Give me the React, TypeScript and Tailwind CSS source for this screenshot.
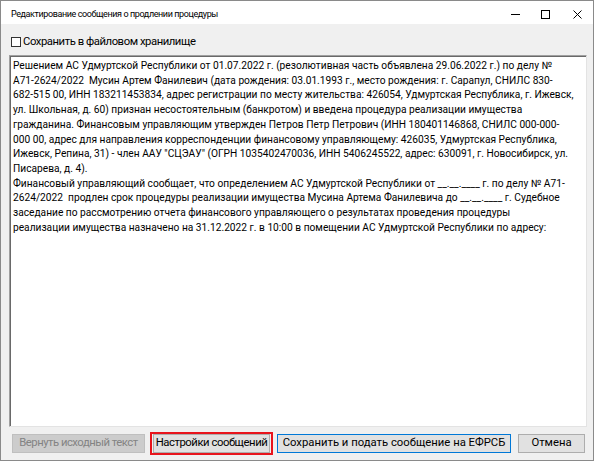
import React from "react";

const lines = [
  "Решением АС Удмуртской Республики от 01.07.2022 г. (резолютивная часть объявлена 29.06.2022 г.) по делу №",
  "А71-2624/2022  Мусин Артем Фанилевич (дата рождения: 03.01.1993 г., место рождения: г. Сарапул, СНИЛС 830-",
  "682-515 00, ИНН 183211453834, адрес регистрации по месту жительства: 426054, Удмуртская Республика, г. Ижевск,",
  "ул. Школьная, д. 60) признан несостоятельным (банкротом) и введена процедура реализации имущества",
  "гражданина. Финансовым управляющим утвержден Петров Петр Петрович (ИНН 180401146868, СНИЛС 000-000-",
  "000 00, адрес для направления корреспонденции финансовому управляющему: 426035, Удмуртская Республика,",
  "Ижевск, Репина, 31) - член ААУ \"СЦЭАУ\" (ОГРН 1035402470036, ИНН 5406245522, адрес: 630091, г. Новосибирск, ул.",
  "Писарева, д. 4).",
  "Финансовый управляющий сообщает, что определением АС Удмуртской Республики от __.__.____ г. по делу № А71-",
  "2624/2022  продлен срок процедуры реализации имущества Мусина Артема Фанилевича до __.__.____ г. Судебное",
  "заседание по рассмотрению отчета финансового управляющего о результатах проведения процедуры",
  "реализации имущества назначено на 31.12.2022 г. в 10:00 в помещении АС Удмуртской Республики по адресу:",
];

export default function App() {
  return (
    <div className="w-[598px] h-[465px] bg-white relative" style={{ fontFamily: 'Roboto, "Noto Sans", sans-serif' }}>
      <div className="w-[594px] h-[461px] border border-[#8a8a8a] bg-[#f0f0f0] flex flex-col">
        {/* Title bar */}
        <div className="h-[23px] pt-[3px] bg-white flex items-center shrink-0">
          <div className="pl-[10px] text-[9px] tracking-[-0.4px] text-black flex-1 leading-none whitespace-nowrap">Редактирование сообщения о продлении процедуры</div>
          <div className="flex items-center h-full">
            <div className="w-[30px] h-full flex items-center justify-center">
              <svg width="9" height="9" viewBox="0 0 9 9"><line x1="0" y1="4.5" x2="9" y2="4.5" stroke="#000" strokeWidth="1" /></svg>
            </div>
            <div className="w-[31px] h-full flex items-center justify-center">
              <svg width="9" height="9" viewBox="0 0 9 9"><rect x="0.5" y="0.5" width="8" height="8" fill="none" stroke="#000" strokeWidth="1" /></svg>
            </div>
            <div className="w-[32px] h-full flex items-center justify-center">
              <svg width="9" height="9" viewBox="0 0 9 9"><path d="M0.5 0.5 L8.5 8.5 M8.5 0.5 L0.5 8.5" stroke="#000" strokeWidth="1" /></svg>
            </div>
          </div>
        </div>
        {/* Body */}
        <div className="flex-1 flex flex-col px-[8px] pr-[6px]">
          <div className="mt-[11px] h-[13px] flex items-center ml-[2px]">
            <div className="w-[10px] h-[10px] border border-[#333] bg-white shrink-0" />
            <span className="ml-[2px] text-[11.3px] tracking-[-0.45px] text-black leading-none whitespace-nowrap">Сохранить в файловом хранилище</span>
          </div>
          <div className="mt-[7px] h-[372px] bg-white border-t border-l border-[#a0a0a0] border-r border-b border-r-[#e3e3e3] border-b-[#e3e3e3] shadow-[inset_1px_1px_0_#696969] overflow-hidden">
            <div className="pl-[3px] pt-[3px] text-[10.2px] leading-[14.7px] text-black">
              {lines.map((l, i) => (
                <div key={i} className="whitespace-pre">{l}</div>
              ))}
            </div>
          </div>
          <div className="mt-[4px] flex items-center h-[24px]">
            <div className="ml-[3px] w-[133px] h-[19px] bg-[#cccccc] border border-[#bfbfbf] flex items-center justify-center text-[11.3px] tracking-[-0.5px] text-[#838383] whitespace-nowrap shrink-0">Вернуть исходный текст</div>
            <div className="ml-[5px] w-[123px] h-[23px] border-2 border-[#e8141c] flex items-center justify-center shrink-0">
              <div className="w-[117px] h-[19px] bg-[#e1e1e1] border border-[#adadad] flex items-center justify-center text-[11.3px] tracking-[-0.45px] text-black whitespace-nowrap">Настройки сообщений</div>
            </div>
            <div className="ml-[4px] w-[234px] h-[19px] bg-[#e1e1e1] border border-[#0078d7] flex items-center justify-center text-[11.3px] text-black whitespace-nowrap shrink-0">Сохранить и подать сообщение на ЕФРСБ</div>
            <div className="ml-[7px] w-[67px] h-[19px] bg-[#e1e1e1] border border-[#adadad] flex items-center justify-center text-[11.3px] text-black whitespace-nowrap shrink-0">Отмена</div>
          </div>
        </div>
      </div>
    </div>
  );
}
